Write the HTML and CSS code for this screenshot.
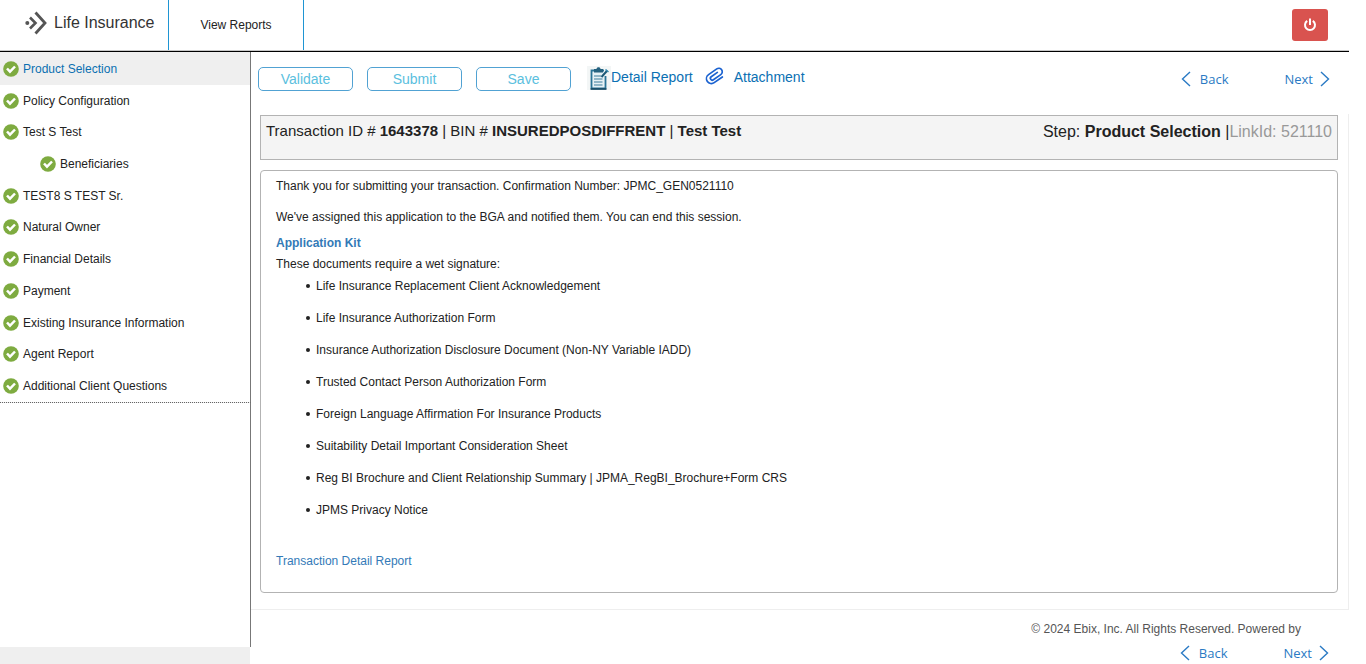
FILE: index.html
```html
<!DOCTYPE html>
<html lang="en">
<head>
<meta charset="utf-8">
<title>Life Insurance</title>
<link rel="stylesheet" href="styles.css">
</head>
<body>
<svg class="defs" aria-hidden="true">
  <symbol id="check" viewBox="0 0 16 16"><circle cx="8" cy="8" r="7.8" fill="#7eab40"/><path d="M4 7.500l3 3.200L12 5.500" fill="none" stroke="#fff" stroke-width="2.500"/></symbol>
  <symbol id="prev" viewBox="0 0 10 16"><path d="M9 1L1.500 8L9 15" fill="none" stroke="#2a7ac4" stroke-width="1.400"/></symbol>
  <symbol id="next" viewBox="0 0 10 16"><path d="M1 1L8.500 8L1 15" fill="none" stroke="#2a7ac4" stroke-width="1.400"/></symbol>
</svg>
<div class="page">
  <header class="topbar">
    <a class="brand" href="#">
      <svg class="brand-icon" viewBox="0 0 22 24" aria-hidden="true"><circle cx="2.300" cy="12" r="2" fill="#555"/><path d="M5 6.500l5.500 5.500L5 17.500" fill="none" stroke="#555" stroke-width="2.600"/><path d="M10.500 1.500L20 12L10.500 22.500" fill="none" stroke="#555" stroke-width="2.800"/></svg>
      <span>Life Insurance</span>
    </a>
    <a class="reports" href="#">View Reports</a>
    <button class="power" type="button" aria-label="Log out">
      <svg viewBox="0 0 14 14" aria-hidden="true"><path d="M4.200 2.900a5 5 0 1 0 5.600 0M7 .5v6.500" fill="none" stroke="#fff" stroke-width="2"/></svg>
    </button>
  </header>
  <div class="body">
    <nav class="sidebar">
      <ul class="steps">
        <li class="step active"><a href="#"><svg><use href="#check"/></svg>Product Selection</a></li>
        <li class="step"><a href="#"><svg><use href="#check"/></svg>Policy Configuration</a></li>
        <li class="step"><a href="#"><svg><use href="#check"/></svg>Test S Test</a></li>
        <li class="step child"><a href="#"><svg><use href="#check"/></svg>Beneficiaries</a></li>
        <li class="step"><a href="#"><svg><use href="#check"/></svg>TEST8 S TEST Sr.</a></li>
        <li class="step"><a href="#"><svg><use href="#check"/></svg>Natural Owner</a></li>
        <li class="step"><a href="#"><svg><use href="#check"/></svg>Financial Details</a></li>
        <li class="step"><a href="#"><svg><use href="#check"/></svg>Payment</a></li>
        <li class="step"><a href="#"><svg><use href="#check"/></svg>Existing Insurance Information</a></li>
        <li class="step"><a href="#"><svg><use href="#check"/></svg>Agent Report</a></li>
        <li class="step"><a href="#"><svg><use href="#check"/></svg>Additional Client Questions</a></li>
      </ul>
      <div class="sidebar-rest"></div>
    </nav>
    <main class="main">
      <div class="toolbar">
        <div class="actions">
          <button class="action" type="button">Validate</button>
          <button class="action" type="button">Submit</button>
          <button class="action" type="button">Save</button>
        </div>
        <a class="tool" href="#">
          <svg class="report-icon" viewBox="0 0 24 24" aria-hidden="true"><path fill="#f3f6f6" d="M0 0h24v24H0z"/><path d="M18.500 10v12.500H4.500v-18H17" fill="#e6f1f5" stroke="#2a7396" stroke-width="1.800"/><path d="M3.600 23h15.800" stroke="#16465f" stroke-width="1.500"/><path d="M7 3h2.500c0-2.500 4-2.500 4 0H16v3.500H7z" fill="#24617f"/><path d="M7 10h7M7 13h8.500M7 16h8.500M7 19h8.500" stroke="#3b7c9b" stroke-width="1.200"/><path d="M14.500 11l5.800-6.500" stroke="#1b5876" stroke-width="2"/><path d="M18.500 3.500l3 2.500" stroke="#3589ae" stroke-width="1.500"/></svg>
          <span>Detail Report</span>
        </a>
        <a class="tool attach" href="#">
          <svg class="clip-icon" viewBox="0 0 20 20" aria-hidden="true"><g transform="rotate(-35 10 10)" fill="none" stroke="#1b62d0" stroke-width="1.700" stroke-linecap="round"><path d="M15.500 15H5.500a4.900 4.900 0 0 1 0-9.800H15.500a3.500 3.500 0 0 1 0 7H6.500a1.900 1.900 0 0 1 0-3.800H14"/></g></svg>
          <span>Attachment</span>
        </a>
        <div class="pager">
          <a href="#"><svg><use href="#prev"/></svg>Back</a>
          <a href="#">Next<svg><use href="#next"/></svg></a>
        </div>
      </div>
      <section class="content">
        <div class="summary">
          <div class="transaction">Transaction ID # <b>1643378</b> | BIN # <b>INSUREDPOSDIFFRENT</b> | <b>Test Test</b></div>
          <div class="current">Step: <b>Product Selection</b> |<span class="link-id">LinkId: 521110</span></div>
        </div>
        <div class="card">
          <p class="message">Thank you for submitting your transaction. Confirmation Number: JPMC_GEN0521110</p>
          <p class="message">We've assigned this application to the BGA and notified them. You can end this session.</p>
          <a class="kit" href="#">Application Kit</a>
          <p class="wet">These documents require a wet signature:</p>
          <ul class="documents">
            <li>Life Insurance Replacement Client Acknowledgement</li>
            <li>Life Insurance Authorization Form</li>
            <li>Insurance Authorization Disclosure Document (Non-NY Variable IADD)</li>
            <li>Trusted Contact Person Authorization Form</li>
            <li>Foreign Language Affirmation For Insurance Products</li>
            <li>Suitability Detail Important Consideration Sheet</li>
            <li>Reg BI Brochure and Client Relationship Summary | JPMA_RegBI_Brochure+Form CRS</li>
            <li>JPMS Privacy Notice</li>
          </ul>
          <a class="detail" href="#">Transaction Detail Report</a>
        </div>
      </section>
      <footer class="footer">
        <p class="copyright">© 2024 Ebix, Inc. All Rights Reserved. Powered by</p>
        <div class="pager">
          <a href="#"><svg><use href="#prev"/></svg>Back</a>
          <a href="#">Next<svg><use href="#next"/></svg></a>
        </div>
      </footer>
    </main>
  </div>
</div>
</body>
</html>
```
FILE: styles.css
```css
* { box-sizing: border-box; }
body { margin: 0; background: #fff; color: #222; font: 12px/16px "Liberation Sans", Arial, sans-serif; }
a { text-decoration: none; color: inherit; }
ul, p { margin: 0; padding: 0; }
button { font: inherit; cursor: pointer; }
.defs { position: absolute; width: 0; height: 0; }
.page { display: flex; flex-direction: column; min-height: 100vh; margin-right: 17px; }

.topbar { display: flex; height: 52px; border-bottom: 1px solid #000; box-shadow: inset 0 -1px #c8c8c8; }
.brand { display: flex; align-items: center; gap: 7px; width: 169px; height: 50px; padding: 0 0 5px 25px; border-right: 1px solid #1f95d3; color: #333; font-size: 16px; }
.brand-icon { width: 22px; height: 24px; }
.reports { display: flex; align-items: center; justify-content: center; width: 135px; height: 50px; border-right: 1px solid #1f95d3; }
.power { display: flex; align-items: center; justify-content: center; width: 36px; height: 32px; margin: 9px 21px 0 auto; padding: 0; border: 0; border-radius: 3px; background: #d9534f; }
.power svg { width: 14px; height: 14px; }

.body { display: flex; flex: 1; }
.sidebar { display: flex; flex-direction: column; width: 251px; flex: none; }
.steps { display: grid; grid-auto-rows: 1fr; height: 351px; padding-top: 1px; list-style: none; border-bottom: 1px dotted #666; border-right: 1px solid #777; background: linear-gradient(#efefef 1px, transparent 1px); }
.step a { display: flex; align-items: center; gap: 4px; height: 100%; padding-left: 3px; }
.step svg { width: 16px; height: 16px; }
.step.child a { padding-left: 40px; }
.step.active { background: #efefef; color: #0b6fb1; }
.sidebar-rest { flex: 1; border-right: 1px solid #777; }
.sidebar::after { content: ""; width: 250px; height: 17px; background: #efefef; }

.main { flex: 1; min-width: 0; display: flex; flex-direction: column; }
.toolbar { display: flex; align-items: flex-start; height: 62px; padding: 14px 19px 0 7px; }
.actions { display: flex; gap: 14px; padding-top: 1px; }
.action { width: 95px; height: 24px; padding: 0; border: 1px solid #51a2d3; border-radius: 5px; background: #fff; color: #5bc0de; font-size: 14px; line-height: 22px; }
.tool { display: flex; margin-left: 16px; color: #0b70b3; font-size: 14px; line-height: 22px; }
.report-icon { width: 24px; height: 24px; }
.attach { margin-left: 12px; gap: 9px; }
.clip-icon { width: 20px; height: 20px; overflow: visible; }
.pager { display: flex; gap: 56px; margin-left: auto; color: #2a7ac4; font: 13px/16px "Open Sans", "Noto Sans", sans-serif; }
.toolbar .pager { padding-top: 5px; }
.pager a { display: flex; align-items: center; }
.pager svg { width: 10px; height: 16px; }
.pager a:first-child svg { margin-right: 9px; }
.pager a:last-child svg { margin-left: 7px; }

.content { padding: 1px 10px 16px 9px; border-right: 1px solid #eee; border-bottom: 1px solid #eee; }
.summary { display: flex; justify-content: space-between; height: 45px; padding: 6px 5px; border: 1px solid #b3b3b3; background: #f4f4f4; font-size: 15px; line-height: 18px; }
.current { font-size: 16px; line-height: 20px; }
.link-id { color: #999; }
.card { margin-top: 10px; padding: 7px 15px 23px; border: 1px solid #b3b3b3; border-radius: 4px; }
.message { margin-bottom: 15px; }
.kit { display: block; margin-top: -5px; color: #337ab7; font-weight: bold; }
.wet { margin-top: 5px; }
.documents { display: grid; gap: 16px; padding-left: 30px; margin-top: 6px; list-style: none; }
.documents li { display: flex; align-items: center; gap: 6px; }
.documents li::before { content: ""; width: 4px; height: 4px; border-radius: 50%; background: #222; }
.detail { display: block; margin-top: 35px; color: #337ab7; }

.footer { display: flex; flex-direction: column; flex: 1; padding: 11px 20px 0 0; color: #555; }
.copyright { align-self: flex-end; margin-right: 28px; }
.footer .pager { margin-top: 8px; }
```
